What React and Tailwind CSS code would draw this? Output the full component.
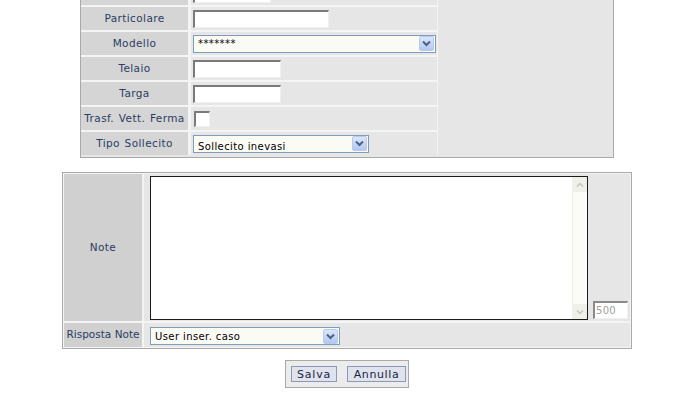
import React from 'react';

const font = { fontFamily: '"DejaVu Sans", Verdana, sans-serif' };

function Chevron() {
  return (
    <span className="w-[15px] h-[15px] bg-gradient-to-b from-[#dbe6fb] to-[#b3c8f1] border border-[#b7c9ef] rounded-[2px] flex items-center justify-center shrink-0">
      <svg width="9" height="7" viewBox="0 0 9 7">
        <path d="M1 1.5 L4.5 5 L8 1.5" fill="none" stroke="#4d6185" strokeWidth="2" />
      </svg>
    </span>
  );
}

function Select({ value, width, low }) {
  return (
    <div className={`h-[18px] ${width} border border-[#7f9db9] bg-[#fbfbf6] flex items-center pl-[4px] pr-[1px]`}>
      <span className={`flex-1 text-[10px] tracking-[0.4px] text-black whitespace-nowrap overflow-hidden ${low ? 'pt-[5px]' : ''}`}>{value}</span>
      <Chevron />
    </div>
  );
}

function TextInput({ width }) {
  return <div className={`h-[18px] ${width} bg-white border-t-2 border-l-2 border-t-[#7a7a7a] border-l-[#7a7a7a] border-b border-r border-b-[#f0f0f0] border-r-[#f0f0f0]`} />;
}

function Row({ label, children }) {
  return (
    <div className="flex gap-[3px] h-[23px]">
      <div className="w-[107px] bg-[#d5d5d5] flex items-center justify-center text-[10.5px] tracking-[0.4px] [word-spacing:1px] text-[#2b3d63] whitespace-nowrap">
        {label}
      </div>
      <div className="flex-1 bg-[#e6e6e6] flex items-center pl-[2px]">{children}</div>
    </div>
  );
}

export default function App() {
  return (
    <div className="w-[677px] h-[399px] bg-white overflow-hidden" style={font}>
      {/* top panel, cut off by the window */}
      <div className="ml-[80px] -mt-[18px] w-[534px] bg-[#e6e6e6] border-l border-r border-b border-[#a9a9a9] pb-[2px]">
        <div className="w-[357px] bg-[#f4f4f4] flex flex-col gap-[2px] pr-[1px]">
          <Row label="">
            <TextInput width="w-[78px]" />
          </Row>
          <Row label="Particolare">
            <TextInput width="w-[136px]" />
          </Row>
          <Row label="Modello">
            <Select value="*******" width="w-[243px]" />
          </Row>
          <Row label="Telaio">
            <TextInput width="w-[88px]" />
          </Row>
          <Row label="Targa">
            <TextInput width="w-[88px]" />
          </Row>
          <Row label="Trasf. Vett. Ferma">
            <div className="ml-[1px] w-[16px] h-[16px] bg-white border-t-2 border-l-2 border-t-[#7a7a7a] border-l-[#7a7a7a] border-b border-r border-b-[#f0f0f0] border-r-[#f0f0f0]" />
          </Row>
          <Row label="Tipo Sollecito">
            <Select value="Sollecito inevasi" width="w-[176px]" low />
          </Row>
        </div>
      </div>

      {/* note panel */}
      <div className="ml-[62px] mt-[14px] w-[570px] border border-[#a9a9a9] bg-[#f4f4f4] p-[1px] flex flex-col gap-[2px]">
        <div className="flex gap-[2px] h-[147px]">
          <div className="w-[78px] bg-[#d0d0d0] flex items-center justify-center text-[10.5px] tracking-[0.4px] text-[#2b3d63]">Note</div>
          <div className="flex-1 bg-[#e6e6e6] flex items-end pl-[6px] pb-[1px] gap-[5px]">
            <div className="w-[438px] h-[144px] bg-white border border-[#1c1c1c] flex justify-end">
              <div className="w-[15px] h-full bg-[#fbfbf8] border-l border-[#efefe8] flex flex-col justify-between">
                <span className="h-[15px] bg-[#f0f0ea] flex items-center justify-center">
                  <svg width="8" height="6" viewBox="0 0 8 6"><path d="M1 4.5 L4 1.5 L7 4.5" fill="none" stroke="#c5c5bb" strokeWidth="1.5" /></svg>
                </span>
                <span className="h-[15px] bg-[#f0f0ea] flex items-center justify-center">
                  <svg width="8" height="6" viewBox="0 0 8 6"><path d="M1 1.5 L4 4.5 L7 1.5" fill="none" stroke="#c5c5bb" strokeWidth="1.5" /></svg>
                </span>
              </div>
            </div>
            <div className="w-[35px] h-[18px] bg-white border-t-2 border-l-2 border-t-[#8a8a8a] border-l-[#8a8a8a] border-b border-r border-b-[#f0f0f0] border-r-[#f0f0f0] text-[10px] tracking-[0.3px] text-[#a0a0a0] leading-[15px] pl-[1px] mb-[1px]">500</div>
          </div>
        </div>
        <div className="flex gap-[2px] h-[24px]">
          <div className="w-[78px] bg-[#d0d0d0] flex items-center justify-center text-[10.5px] text-[#2b3d63] whitespace-nowrap">Risposta Note</div>
          <div className="flex-1 bg-[#e6e6e6] flex items-center pl-[6px] pt-[2px]">
            <Select value="User inser. caso" width="w-[190px]" />
          </div>
        </div>
      </div>

      {/* buttons */}
      <div className="ml-[62px] w-[570px] flex justify-center mt-[11px]">
        <div className="w-[124px] h-[28px] border border-[#a9a9a9] bg-[#ececec] flex items-center gap-[10px] pl-[5px]">
          <button className="w-[46px] h-[16px] bg-[#dfe3ee] border border-[#8e97b3] text-[11px] tracking-[0.8px] text-[#1c2440] leading-none">Salva</button>
          <button className="w-[59px] h-[16px] bg-[#dfe3ee] border border-[#8e97b3] text-[11px] tracking-[0.6px] text-[#1c2440] leading-none">Annulla</button>
        </div>
      </div>
    </div>
  );
}
